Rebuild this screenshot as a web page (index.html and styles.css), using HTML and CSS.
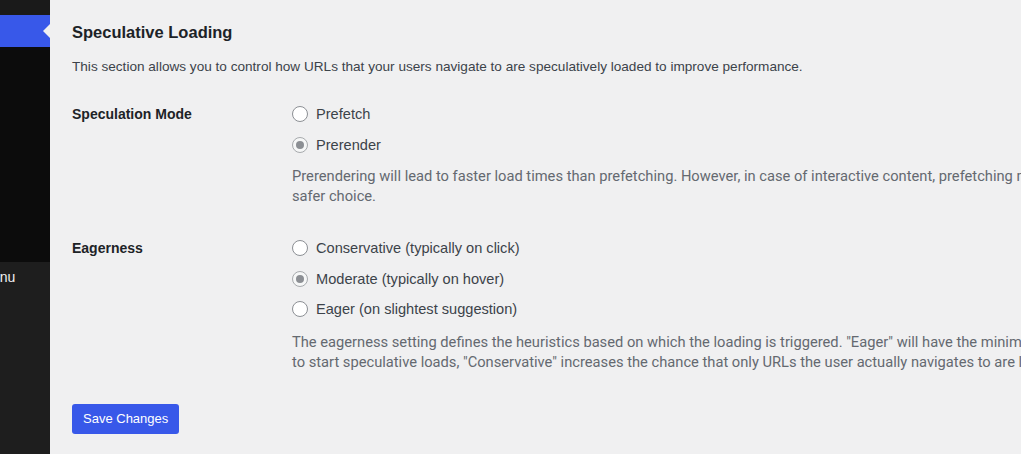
FILE: index.html
```html
<!DOCTYPE html>
<html lang="en">
<head>
    <meta charset="UTF-8">
    <meta name="viewport" content="width=device-width, initial-scale=1.0">
    <title>Reading Settings</title>
    <link rel="stylesheet" href="styles.css">
</head>
<body>
<div class="admin-wrap">
    <div class="admin-menu">
        <div class="menu-top"></div>
        <div class="menu-current"><span class="menu-arrow"></span></div>
        <div class="menu-sub"></div>
        <div class="menu-rest">
            <span class="collapse-text">Collapse Menu</span>
        </div>
    </div>

    <div class="content">
        <h2>Speculative Loading</h2>
        <p class="section-desc">This section allows you to control how URLs that your users navigate to are speculatively loaded to improve performance.</p>

        <form id="formSpeculative">
            <div class="setting-row">
                <div class="setting-label">Speculation Mode</div>
                <div class="setting-field">
                    <label class="option"><span class="radio"></span>Prefetch</label>
                    <label class="option"><span class="radio checked"></span>Prerender</label>
                    <p class="description">Prerendering will lead to faster load times than prefetching. However, in case of interactive content, prefetching may be a<br>safer choice.</p>
                </div>
            </div>

            <div class="setting-row row-eagerness">
                <div class="setting-label">Eagerness</div>
                <div class="setting-field">
                    <label class="option"><span class="radio"></span>Conservative (typically on click)</label>
                    <label class="option"><span class="radio checked"></span>Moderate (typically on hover)</label>
                    <label class="option"><span class="radio"></span>Eager (on slightest suggestion)</label>
                    <p class="description">The eagerness setting defines the heuristics based on which the loading is triggered. "Eager" will have the minimum threshold<br>to start speculative loads, "Conservative" increases the chance that only URLs the user actually navigates to are loaded.</p>
                </div>
            </div>

            <button type="submit" class="save-btn">Save Changes</button>
        </form>
    </div>
</div>
</body>
</html>
```

FILE: styles.css
```css
:root {
    --cor-fundo: #f0f0f1;
    --cor-texto: #1d2327;
    --cor-texto-2: #3c434a;
    --cor-azul: #3858e9;
    --cor-menu: #1e1e1e;
    --cor-submenu: #0c0c0c;
}

* {
    box-sizing: border-box;
    margin: 0;
    padding: 0;
}

body {
    font-family: "Liberation Sans", Arial, sans-serif;
    background-color: var(--cor-fundo);
    color: var(--cor-texto);
    width: 1021px;
    height: 454px;
    overflow: hidden;
}

.admin-wrap {
    display: flex;
    height: 100%;
}

.admin-menu {
    width: 50px;
    flex-shrink: 0;
    display: flex;
    flex-direction: column;
    overflow: hidden;
    background: var(--cor-menu);
}

.menu-top {
    height: 15px;
    background: #1a1a1a;
}

.menu-current {
    height: 32px;
    background: var(--cor-azul);
    display: flex;
    justify-content: flex-end;
    align-items: center;
}

/* seta que aponta para a pagina atual */
.menu-arrow {
    width: 0;
    height: 0;
    border-top: 7px solid transparent;
    border-bottom: 7px solid transparent;
    border-right: 7px solid var(--cor-fundo);
}

.menu-sub {
    height: 215px;
    background: var(--cor-submenu);
}

.menu-rest {
    flex: 1;
    padding-top: 6px;
}

.collapse-text {
    display: block;
    white-space: nowrap;
    color: #f0f0f1;
    font-size: 14px;
    line-height: 18px;
    margin-left: -78px;
}

.content {
    flex: 1;
    padding: 21px 0 0 22px;
    overflow: hidden;
}

h2 {
    font-size: 16.5px;
    line-height: 22px;
    font-weight: 600;
    color: var(--cor-texto);
}

.section-desc {
    margin-top: 14px;
    font-size: 13.6px;
    line-height: 20px;
    color: var(--cor-texto-2);
    white-space: nowrap;
}

.setting-row {
    display: flex;
    margin-top: 22px;
}

.row-eagerness {
    margin-top: 27px;
}

.setting-label {
    width: 220px;
    flex-shrink: 0;
    font-size: 14px;
    font-weight: 600;
    line-height: 30px;
    color: var(--cor-texto);
}

.setting-field {
    flex: 1;
    min-width: 0;
}

.option {
    display: flex;
    align-items: center;
    height: 30.75px;
    font-size: 14.6px;
    color: var(--cor-texto-2);
}

.radio {
    width: 16px;
    height: 16px;
    border: 1px solid #8c8f94;
    border-radius: 50%;
    background: #fff;
    margin-right: 8px;
    display: flex;
    justify-content: center;
    align-items: center;
}

.radio.checked {
    background: #f6f7f7;
    border-color: #a7aaad;
}

.radio.checked::before {
    content: "";
    width: 8px;
    height: 8px;
    border-radius: 50%;
    background: #8c8f94;
}

.description {
    margin-top: 5px;
    white-space: nowrap;
    font-family: Roboto, "Liberation Sans", sans-serif;
    font-size: 14.7px;
    line-height: 20px;
    color: #646970;
}

.row-eagerness .description {
    margin-top: 7px;
}

.save-btn {
    margin-top: 32px;
    height: 30px;
    padding: 0 11px;
    background: var(--cor-azul);
    border: none;
    border-radius: 3px;
    color: #fff;
    font-family: "Liberation Sans", Arial, sans-serif;
    font-size: 13px;
    cursor: pointer;
}

.save-btn:hover {
    background: #2145e6;
}
```
